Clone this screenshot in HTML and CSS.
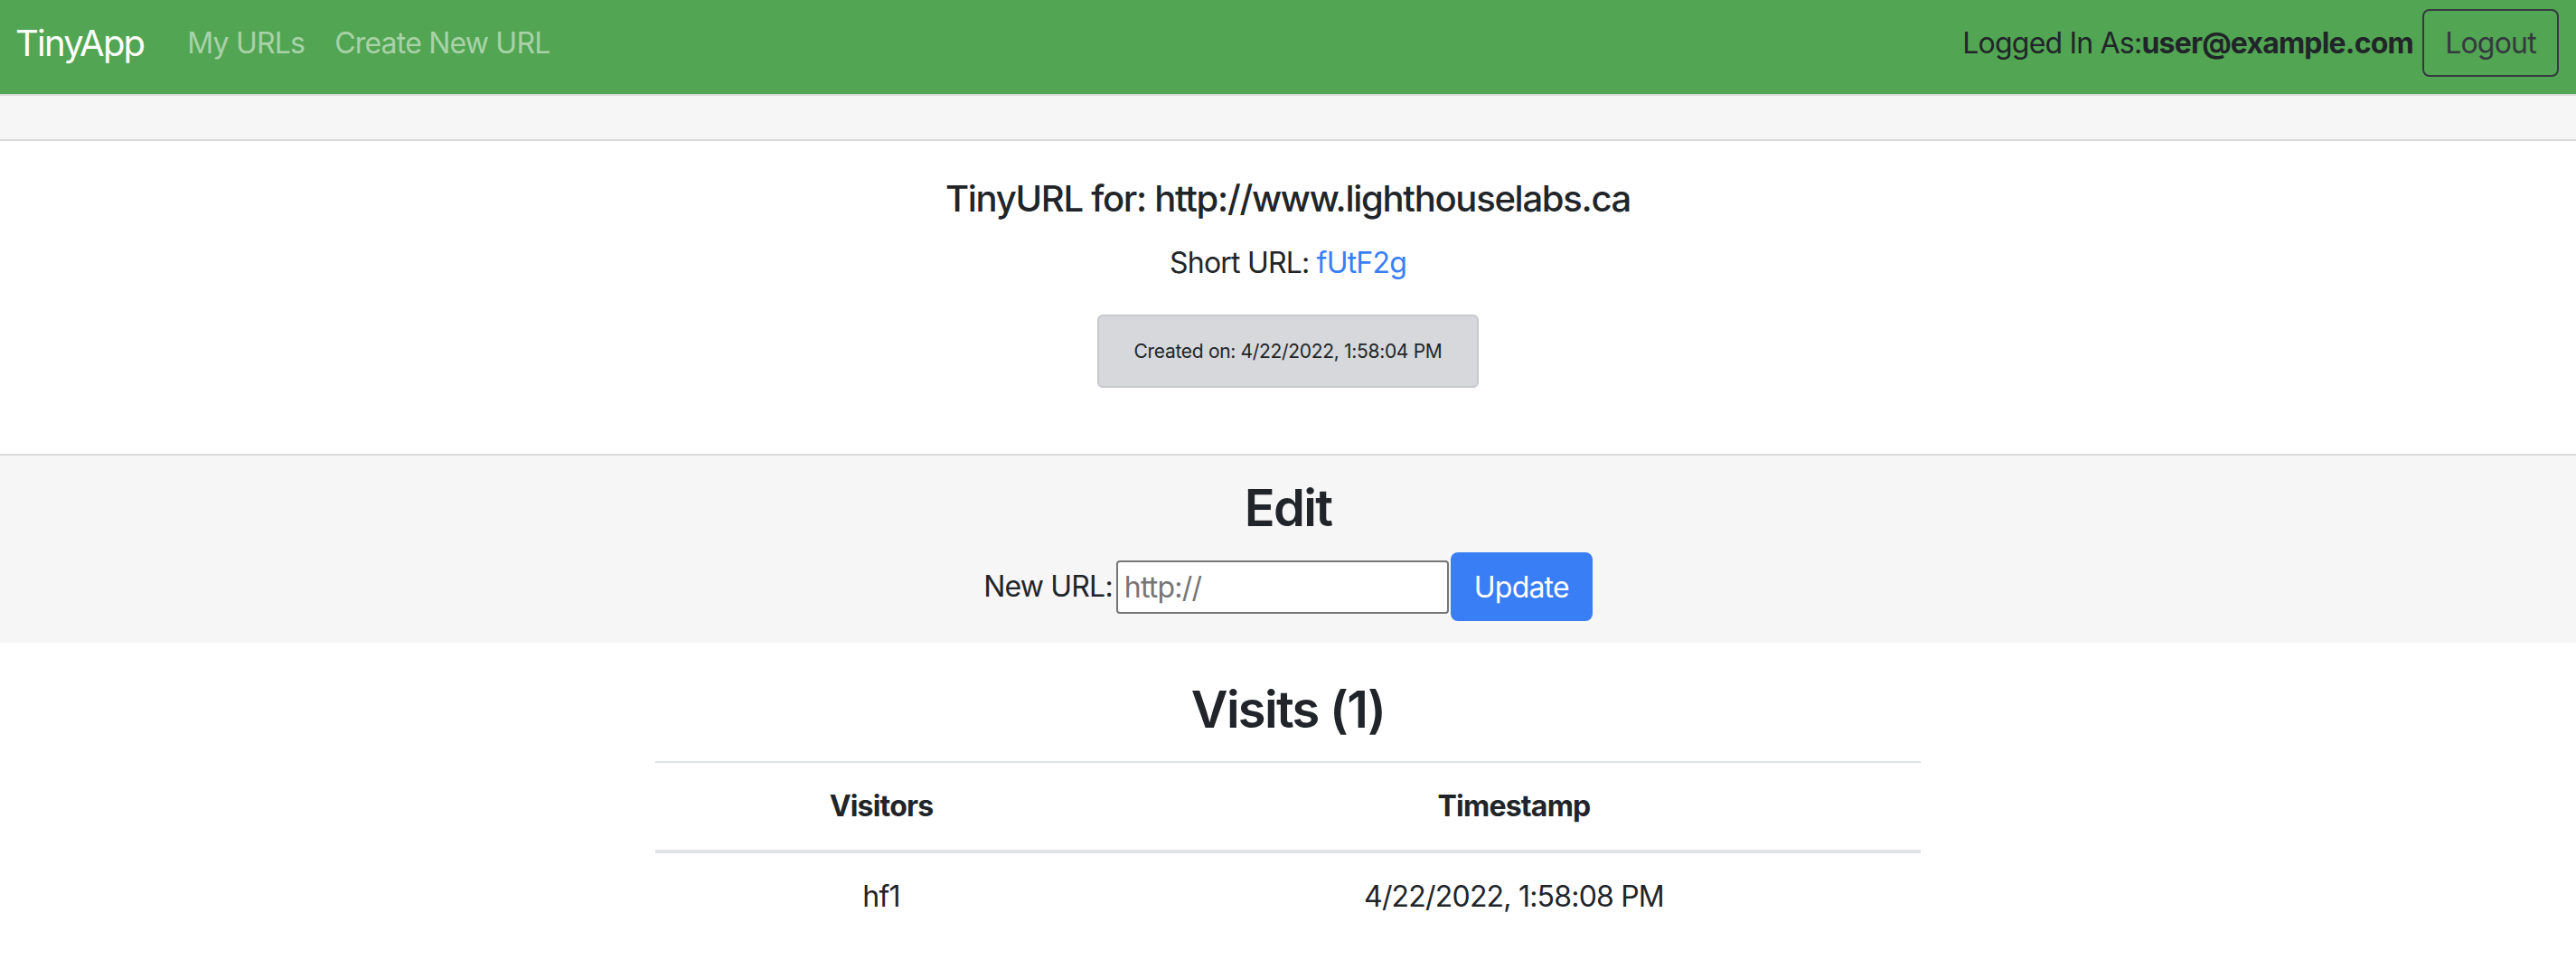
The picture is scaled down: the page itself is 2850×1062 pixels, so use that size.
FILE: index.html
```html
<!DOCTYPE html>
<html lang="en">
<head>
<meta charset="utf-8">
<title>TinyApp</title>
<link rel="stylesheet" href="styles.css">
</head>
<body>
<nav class="navbar">
  <a class="brand" href="#">TinyApp</a>
  <a class="nav-link" href="#">My URLs</a>
  <a class="nav-link" href="#">Create New URL</a>
  <div class="user">Logged In As:<b>user@example.com</b></div>
  <button class="logout" type="button">Logout</button>
</nav>
<div class="strip"></div>
<main>
  <section class="info">
    <h4 class="info-title">TinyURL for: http://www.lighthouselabs.ca</h4>
    <p class="short">Short URL: <a class="short-link" href="#">fUtF2g</a></p>
    <div class="created">Created on: 4/22/2022, 1:58:04 PM</div>
  </section>
  <section class="edit">
    <h3 class="section-title">Edit</h3>
    <form class="url-form">
      <label class="url-label" for="longURL">New URL:</label>
      <input class="url-input" id="longURL" type="text" placeholder="http://">
      <button class="update" type="button">Update</button>
    </form>
  </section>
  <section class="visits">
    <h3 class="section-title">Visits (1)</h3>
    <table class="visit-table">
      <colgroup><col class="col-visitor"><col class="col-time"></colgroup>
      <thead>
        <tr><th>Visitors</th><th>Timestamp</th></tr>
      </thead>
      <tbody>
        <tr><td>hf1</td><td>4/22/2022, 1:58:08 PM</td></tr>
      </tbody>
    </table>
  </section>
</main>
</body>
</html>
```

FILE: styles.css
```css
* { box-sizing: border-box; }
html, body { margin: 0; padding: 0; }
body {
  font-family: Inter, "Liberation Sans", Arial, sans-serif;
  color: #212529;
  background: #fff;
  font-size: 32px;
  line-height: 40px;
  letter-spacing: -0.025em;
}
a { text-decoration: none; }

.navbar {
  display: flex;
  align-items: center;
  height: 104px;
  padding: 10px 19px 19px 17px;
  background: #52a552;
}
.brand {
  color: #fff;
  font-size: 40px;
  line-height: 48px;
  margin-right: 48px;
  letter-spacing: -0.045em;
}
.nav-link {
  color: rgba(255, 255, 255, 0.5);
  font-size: 32px;
  margin-right: 33px;
}
.user {
  margin-left: auto;
  margin-right: 10px;
  color: #212529;
}
.user b { font-weight: 700; }
.logout {
  height: 75px;
  width: 151px;
  border: 2px solid #343a40;
  border-radius: 8px;
  background: transparent;
  color: #343a40;
  font-family: inherit;
  font-size: 32px;
  letter-spacing: inherit;
  padding: 0;
}

.strip {
  height: 52px;
  background: #f6f6f6;
  border-top: 2px solid #dadada;
  border-bottom: 2px solid #dadada;
}

.info {
  text-align: center;
  padding: 40px 0 73px;
}
.info-title {
  margin: 0;
  font-size: 40px;
  line-height: 48px;
  font-weight: 500;
  letter-spacing: -0.032em;
}
.short {
  margin: 27px 0 0;
}
.short-link { color: #3a7ef6; }
.created {
  width: fit-content;
  margin: 37px auto 0;
  padding: 24px 39px;
  border: 2px solid #c6c8ca;
  border-radius: 6px;
  background: #d6d8db;
  font-size: 21px;
  line-height: 29px;
  letter-spacing: -0.015em;
}

.edit {
  background: #f6f6f6;
  border-top: 2px solid #d9d9d9;
  padding: 25px 0 24px;
  text-align: center;
}
.section-title {
  margin: 0;
  font-size: 56px;
  line-height: 67px;
  font-weight: 600;
  letter-spacing: -0.03em;
}
.url-form {
  display: flex;
  justify-content: center;
  align-items: center;
  margin-top: 15px;
}
.url-label { margin-right: 4px; }
.url-input {
  width: 368px;
  height: 59px;
  border: 2px solid #767676;
  border-radius: 4px;
  padding: 0 7px;
  font-family: inherit;
  font-size: 32px;
  letter-spacing: inherit;
  margin-right: 2px;
  background: #fff;
}
.url-input::placeholder { color: #757575; }
.update {
  width: 157px;
  height: 76px;
  border: 0;
  border-radius: 8px;
  background: #3a7ef6;
  color: #fff;
  font-family: inherit;
  font-size: 32px;
  letter-spacing: inherit;
  padding: 0;
}

.visits {
  padding-top: 41px;
  text-align: center;
}
.visit-table {
  width: 1400px;
  margin: 23px auto 0;
  border-collapse: collapse;
}
.col-visitor { width: 500px; }
.col-time { width: 900px; }
.visit-table th {
  border-top: 2px solid #dee2e6;
  border-bottom: 4px solid #dee2e6;
  padding: 28px;
  font-weight: 700;
}
.visit-table td {
  padding: 28px;
}
```
